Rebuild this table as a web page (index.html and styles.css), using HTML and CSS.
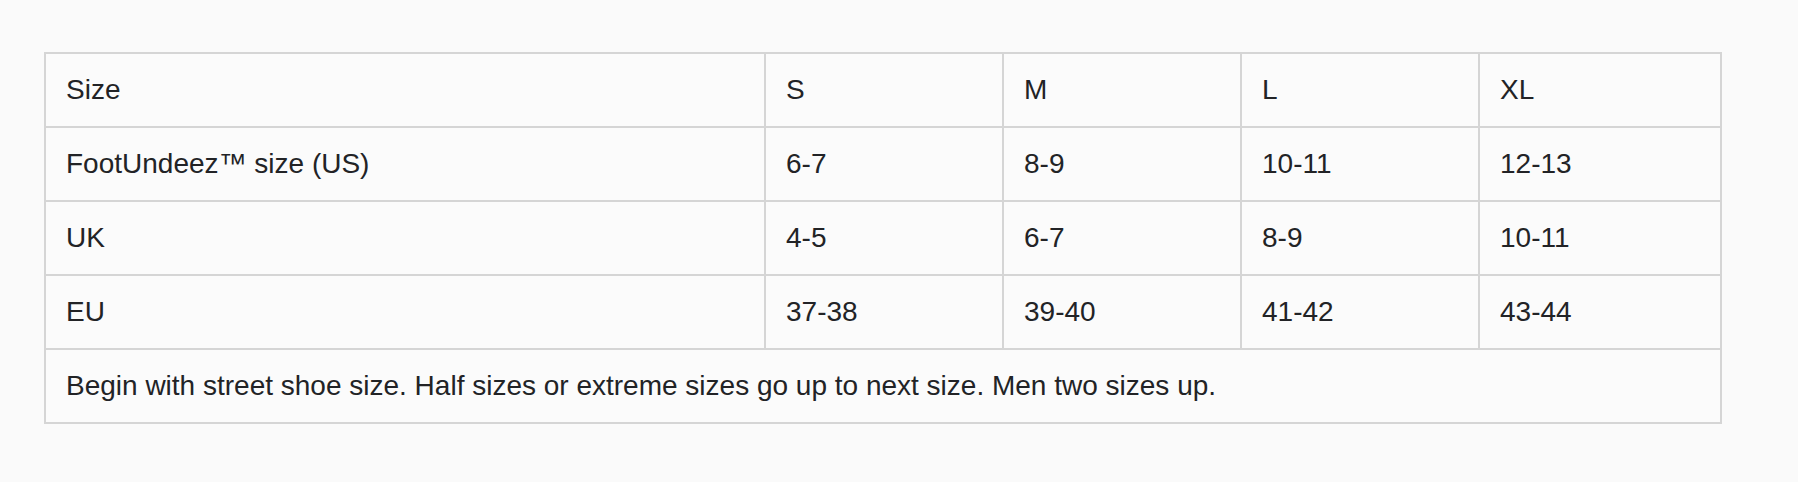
FILE: index.html
```html
<!DOCTYPE html>
<html lang="en">
<head>
<meta charset="utf-8">
<title>Size chart</title>
<link rel="stylesheet" href="styles.css">
</head>
<body>
<div class="page">
  <table class="size-table">
    <colgroup>
      <col class="col-label">
      <col class="col-size">
      <col class="col-size">
      <col class="col-size">
      <col class="col-last">
    </colgroup>
    <tbody>
      <tr><td>Size</td><td>S</td><td>M</td><td>L</td><td>XL</td></tr>
      <tr><td>FootUndeez™ size (US)</td><td>6-7</td><td>8-9</td><td>10-11</td><td>12-13</td></tr>
      <tr><td>UK</td><td>4-5</td><td>6-7</td><td>8-9</td><td>10-11</td></tr>
      <tr><td>EU</td><td>37-38</td><td>39-40</td><td>41-42</td><td>43-44</td></tr>
      <tr><td colspan="5">Begin with street shoe size. Half sizes or extreme sizes go up to next size. Men two sizes up.</td></tr>
    </tbody>
  </table>
</div>
</body>
</html>
```

FILE: styles.css
```css
html, body {
  margin: 0;
  padding: 0;
  background: #fafafa;
}

.page {
  padding: 52px 0 0 44px;
}

.size-table {
  border-collapse: collapse;
  table-layout: fixed;
  width: 1678px;
  font-family: "Liberation Sans", Arial, Helvetica, sans-serif;
  font-size: 28px;
  line-height: 42px;
  color: #222326;
  background: #fbfbfb;
}

.col-label { width: 720px; }
.col-size { width: 238px; }

.size-table td {
  border: 2px solid #d5d5d5;
  padding: 15px 20px;
  text-align: left;
  vertical-align: middle;
  white-space: nowrap;
}
```
